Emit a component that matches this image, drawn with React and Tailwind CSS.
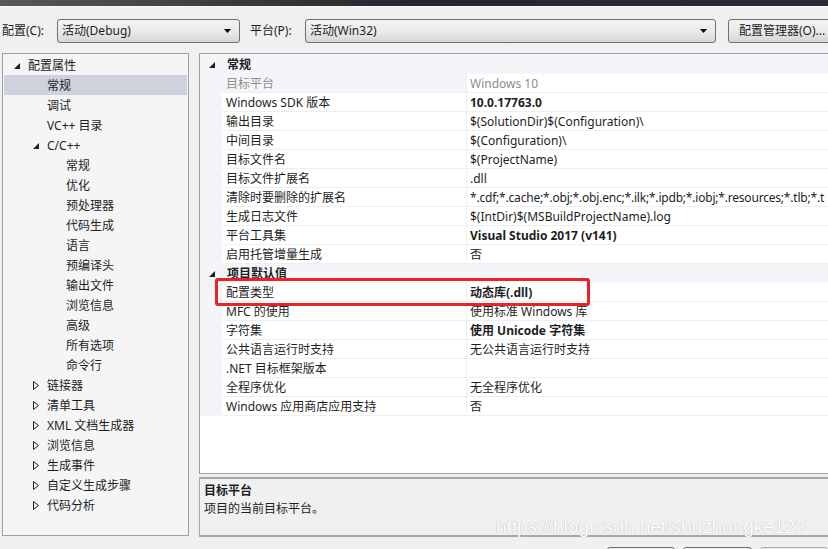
import React from 'react';

const FONT = { fontFamily: '"Noto Sans", "Noto Sans CJK SC", sans-serif' };

const Expanded = () => (
  <svg width="6" height="6" viewBox="0 0 6 6" className="block">
    <polygon points="6,0 6,6 0,6" fill="#1e1e1e" />
  </svg>
);

const Collapsed = () => (
  <svg width="6" height="9" viewBox="0 0 6 9" className="block">
    <polygon points="0.5,0.5 5.5,4.5 0.5,8.5" fill="none" stroke="#1e1e1e" strokeWidth="1" />
  </svg>
);

const treeItems = [
  { label: '配置属性', level: 0, arrow: 'open' },
  { label: '常规', level: 1, selected: true },
  { label: '调试', level: 1 },
  { label: 'VC++ 目录', level: 1 },
  { label: 'C/C++', level: 1, arrow: 'open' },
  { label: '常规', level: 2 },
  { label: '优化', level: 2 },
  { label: '预处理器', level: 2 },
  { label: '代码生成', level: 2 },
  { label: '语言', level: 2 },
  { label: '预编译头', level: 2 },
  { label: '输出文件', level: 2 },
  { label: '浏览信息', level: 2 },
  { label: '高级', level: 2 },
  { label: '所有选项', level: 2 },
  { label: '命令行', level: 2 },
  { label: '链接器', level: 1, arrow: 'closed' },
  { label: '清单工具', level: 1, arrow: 'closed' },
  { label: 'XML 文档生成器', level: 1, arrow: 'closed' },
  { label: '浏览信息', level: 1, arrow: 'closed' },
  { label: '生成事件', level: 1, arrow: 'closed' },
  { label: '自定义生成步骤', level: 1, arrow: 'closed' },
  { label: '代码分析', level: 1, arrow: 'closed' },
];

const indent = ['pl-[24px]', 'pl-[43px]', 'pl-[62px]'];
const arrowPos = ['left-[10px]', 'left-[29px]', 'left-[48px]'];

const general = [
  { name: '目标平台', value: 'Windows 10', disabled: true },
  { name: 'Windows SDK 版本', value: '10.0.17763.0', bold: true },
  { name: '输出目录', value: '$(SolutionDir)$(Configuration)\\' },
  { name: '中间目录', value: '$(Configuration)\\' },
  { name: '目标文件名', value: '$(ProjectName)' },
  { name: '目标文件扩展名', value: '.dll' },
  { name: '清除时要删除的扩展名', value: '*.cdf;*.cache;*.obj;*.obj.enc;*.ilk;*.ipdb;*.iobj;*.resources;*.tlb;*.t', tight: true },
  { name: '生成日志文件', value: '$(IntDir)$(MSBuildProjectName).log' },
  { name: '平台工具集', value: 'Visual Studio 2017 (v141)', bold: true },
  { name: '启用托管增量生成', value: '否' },
];

const defaults = [
  { name: '配置类型', value: '动态库(.dll)', bold: true },
  { name: 'MFC 的使用', value: '使用标准 Windows 库' },
  { name: '字符集', value: '使用 Unicode 字符集', bold: true },
  { name: '公共语言运行时支持', value: '无公共语言运行时支持' },
  { name: '.NET 目标框架版本', value: '' },
  { name: '全程序优化', value: '无全程序优化' },
  { name: 'Windows 应用商店应用支持', value: '否' },
];

const Combo = ({ text, width }) => (
  <div className={`${width} shrink-0 h-[24px] flex items-center justify-between pl-[4px] pr-[8px] border border-[#707070] rounded-[3px] bg-gradient-to-b from-[#f2f2f2] via-[#ebebeb] to-[#d6d6d6]`}>
    <span>{text}</span>
    <svg width="7" height="4" viewBox="0 0 7 4"><polygon points="0,0 7,0 3.5,4" fill="#000" /></svg>
  </div>
);

const Row = ({ name, value, disabled, bold, tight }) => (
  <div className="flex h-[19px] border-b border-[#eceff4]">
    <div className={`w-[245px] shrink-0 pl-[4px] pt-px flex items-center border-r border-[#eceff4] ${disabled ? 'text-[#8d8d8d]' : 'bg-white'}`}>
      {name}
    </div>
    <div className={`flex-1 min-w-0 overflow-hidden pl-[3px] pt-px flex items-center bg-white whitespace-nowrap ${disabled ? 'text-[#8d8d8d]' : ''} ${bold ? 'font-bold' : ''} ${tight ? 'tracking-[-0.2px]' : ''}`}>
      {value}
    </div>
  </div>
);

const Header = ({ label }) => (
  <div className="flex items-center h-[19px] relative">
    <div className="absolute left-[9px] top-[7px]"><Expanded /></div>
    <span className="pl-[27px] pt-px font-bold">{label}</span>
  </div>
);

export default function App() {
  return (
    <div style={FONT} className="w-[828px] h-[549px] overflow-hidden bg-[#f0f0f0] text-[12px] text-[#1e1e1e] relative">
      {/* title strip */}
      <div className="h-[6px] bg-gradient-to-r from-[#585858] via-[#23272d] to-[#2a2d33]" />
      <div className="h-px bg-[#fafafa]" />

      {/* toolbar */}
      <div className="flex items-center h-[24px] mt-[12px] pl-[2px] whitespace-nowrap">
        <span className="w-[55px] shrink-0">配置(C):</span>
        <Combo text="活动(Debug)" width="w-[183px]" />
        <span className="ml-[10px] w-[55px] shrink-0">平台(P):</span>
        <Combo text="活动(Win32)" width="w-[411px]" />
        <div className="ml-[12px] h-[24px] w-[112px] shrink-0 flex items-center pl-[10px] border border-[#707070] rounded-[3px] bg-gradient-to-b from-[#f2f2f2] via-[#ebebeb] to-[#d6d6d6]">
          配置管理器(O)...
        </div>
      </div>

      {/* main */}
      <div className="flex mt-[10px]">
        {/* tree */}
        <div className="ml-[2px] w-[187px] h-[483px] border border-[#a0a0a0] bg-[#f5f5f5] pt-px px-px shrink-0">
          {treeItems.map((it, i) => (
            <div
              key={i}
              className={`relative h-[20px] pt-px flex items-center ${indent[it.level]} ${it.selected ? 'bg-[#cfd1dc]' : ''}`}
            >
              {it.arrow === 'open' && (
                <div className={`absolute ${arrowPos[it.level]} top-[8px]`}><Expanded /></div>
              )}
              {it.arrow === 'closed' && (
                <div className={`absolute ${arrowPos[it.level]} top-[6px]`}><Collapsed /></div>
              )}
              {it.label}
            </div>
          ))}
        </div>

        {/* right side */}
        <div className="ml-[10px] flex-1 flex flex-col">
          <div className="h-[421px] border-l border-t border-b border-[#a0a0a0] bg-white overflow-hidden">
            <div className="w-[629px] bg-[#f3f5f9] pt-px">
              <Header label="常规" />
              <div className="pl-[22px]">
                {general.map((r, i) => <Row key={i} {...r} />)}
              </div>
              <Header label="项目默认值" />
              <div className="pl-[22px] relative">
                {defaults.map((r, i) => <Row key={i} {...r} />)}
                <div className="absolute left-[15px] top-[-5px] w-[375px] h-[28px] border-[3px] border-[#e8232a] rounded-[3px]" />
              </div>
            </div>
          </div>

          {/* description */}
          <div className="mt-[3px] h-[60px] border-l border-t-2 border-b-2 border-[#a8a8a8] bg-[#f0f0f0] pl-[4px] pt-[3px]">
            <div className="font-bold leading-[18px]">目标平台</div>
            <div className="leading-[18px]">项目的当前目标平台。</div>
          </div>
        </div>
      </div>

      {/* bottom buttons */}
      <div className="flex mt-[10px] pl-[607px] gap-[8px]">
        <div className="w-[73px] h-[20px] border border-[#707070] rounded-[3px] bg-[#ececec]" />
        <div className="w-[73px] h-[20px] border border-[#707070] rounded-[3px] bg-[#ececec]" />
        <div className="w-[73px] h-[20px] border border-[#acacac] rounded-[3px] bg-[#ececec]" />
      </div>

      {/* watermark */}
      <div
        className="absolute left-[496px] top-[513px] text-[19px] text-white whitespace-nowrap"
        style={{ fontFamily: '"Liberation Sans", sans-serif', textShadow: '0 0 1px #999' }}
      >
        https://blog.csdn.net/shuzhongke123
      </div>
    </div>
  );
}
